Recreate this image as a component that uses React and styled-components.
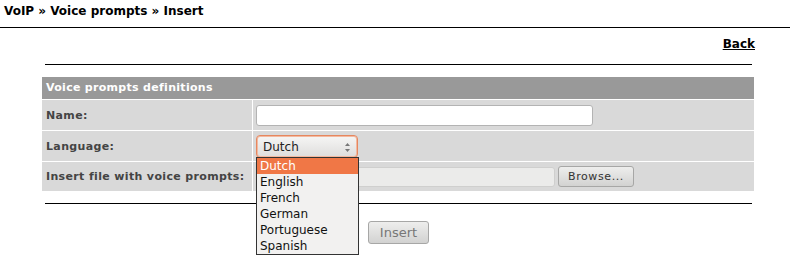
import React from "react";
import styled, { createGlobalStyle } from "styled-components";

const Global = createGlobalStyle`
  html, body { margin: 0; padding: 0; background: #fff; }
  body { font-family: "DejaVu Sans", Verdana, sans-serif; color: #000; }
`;

const Page = styled.div`
  width: 790px;
  height: 271px;
  overflow: hidden;
`;

const Breadcrumb = styled.div`
  font-size: 12px;
  font-weight: bold;
  line-height: 14px;
  padding: 4px 4px 9px;
  border-bottom: 1px solid #000;
`;

const Content = styled.div`
  width: 713px;
  margin-left: 42px;
  display: flex;
  flex-direction: column;
`;

const BackRow = styled.div`
  display: flex;
  justify-content: flex-end;
  padding-top: 9px;
  height: 36px;
  box-sizing: border-box;
`;

const BackLink = styled.a`
  font-size: 12px;
  font-weight: bold;
  line-height: 14px;
  height: 14px;
  color: #000;
  text-decoration: underline;
`;

const Rule = styled.div`
  height: 1px;
  background: #000;
  margin: ${(p) => p.$m};
`;

const Table = styled.div`
  display: grid;
  grid-template-columns: 210px 501px;
  gap: 1px;
  background: #fff;
`;

const Header = styled.div`
  grid-column: 1 / -1;
  background: #999;
  color: #fff;
  font-size: 11px;
  font-weight: bold;
  height: 22px;
  line-height: 22px;
  padding-left: 4px;
  letter-spacing: 0.3px;
`;

const Label = styled.div`
  background: #d9d9d9;
  color: #444;
  font-size: 11px;
  font-weight: bold;
  letter-spacing: 0.35px;
  height: ${(p) => p.$h || 30}px;
  display: flex;
  align-items: center;
  padding-left: 4px;
`;

const Cell = styled.div`
  background: #d9d9d9;
  height: ${(p) => p.$h || 30}px;
  display: flex;
  align-items: center;
  padding-left: 3px;
  position: relative;
`;

const TextInput = styled.div`
  width: 337px;
  height: 21px;
  box-sizing: border-box;
  background: #fff;
  border: 1px solid #b3b3b3;
  border-radius: 3px;
`;

const SelectBox = styled.div`
  position: relative;
  width: 102px;
  height: 23px;
  box-sizing: border-box;
  border: 1px solid #e6875f;
  border-radius: 4px;
  box-shadow: inset 0 0 0 1px #f3b9a0;
  background: linear-gradient(#f6f6f5, #dedddc);
  font-family: "DejaVu Sans", sans-serif;
  font-size: 12px;
  color: #222;
  display: flex;
  align-items: center;
  padding-left: 6px;
  margin-top: 1px;
`;

const Arrows = styled.svg`
  position: absolute;
  right: 6px;
  top: 6px;
`;

const List = styled.div`
  position: absolute;
  left: 0;
  top: 23px;
  width: 103px;
  box-sizing: border-box;
  border: 1px solid #333;
  background: #f2f1f0;
  z-index: 5;
  font-family: "DejaVu Sans", sans-serif;
  font-size: 12px;
  color: #111;
`;

const Option = styled.div`
  height: 16px;
  line-height: 16px;
  padding-left: 3px;
  background: ${(p) => (p.$active ? "#f07746" : "transparent")};
  color: ${(p) => (p.$active ? "#fff" : "#111")};
`;

const FileRow = styled.div`
  display: flex;
  align-items: center;
  gap: 3px;
`;

const FileField = styled.div`
  width: 299px;
  height: 20px;
  box-sizing: border-box;
  background: #ebebea;
  border: 1px solid #cfcfce;
  border-radius: 3px;
`;

const Button = styled.div`
  box-sizing: border-box;
  height: ${(p) => p.$h}px;
  width: ${(p) => p.$w}px;
  border: 1px solid #a7a7a6;
  border-radius: 3px;
  background: linear-gradient(#eeeeed, #d2d2d1);
  font-family: "DejaVu Sans", sans-serif;
  font-size: ${(p) => p.$fs}px;
  color: ${(p) => p.$c};
  display: flex;
  align-items: center;
  justify-content: center;
  letter-spacing: ${(p) => p.$ls || 0}px;
`;

const ButtonRow = styled.div`
  display: flex;
  justify-content: center;
  padding-top: 17px;
`;

const SelectWrap = styled.div`
  position: relative;
`;

export default function App() {
  const langs = ["Dutch", "English", "French", "German", "Portuguese", "Spanish"];
  return (
    <Page>
      <Global />
      <Breadcrumb>VoIP » Voice prompts » Insert</Breadcrumb>
      <Content>
        <BackRow>
          <BackLink href="#">Back</BackLink>
        </BackRow>
        <Rule $m="0 3px 12px" />
        <Table>
          <Header>Voice prompts definitions</Header>
          <Label>Name:</Label>
          <Cell>
            <TextInput />
          </Cell>
          <Label>Language:</Label>
          <Cell>
            <SelectWrap>
              <SelectBox>
                Dutch
                <Arrows width="7" height="11" viewBox="0 0 7 11">
                  <path d="M3.5 1 L6 4 L1 4 Z" fill="#777" />
                  <path d="M3.5 10 L6 7 L1 7 Z" fill="#777" />
                </Arrows>
              </SelectBox>
              <List>
                {langs.map((l, i) => (
                  <Option key={l} $active={i === 0}>
                    {l}
                  </Option>
                ))}
              </List>
            </SelectWrap>
          </Cell>
          <Label $h={29}>Insert file with voice prompts:</Label>
          <Cell $h={29}>
            <FileRow>
              <FileField />
              <Button $w={76} $h={21} $fs={11} $c="#333" $ls={0.6}>
                Browse...
              </Button>
            </FileRow>
          </Cell>
        </Table>
        <Rule $m="12px 3px 0" />
        <ButtonRow>
          <Button $w={61} $h={23} $fs={13} $c="#777">
            Insert
          </Button>
        </ButtonRow>
      </Content>
    </Page>
  );
}
